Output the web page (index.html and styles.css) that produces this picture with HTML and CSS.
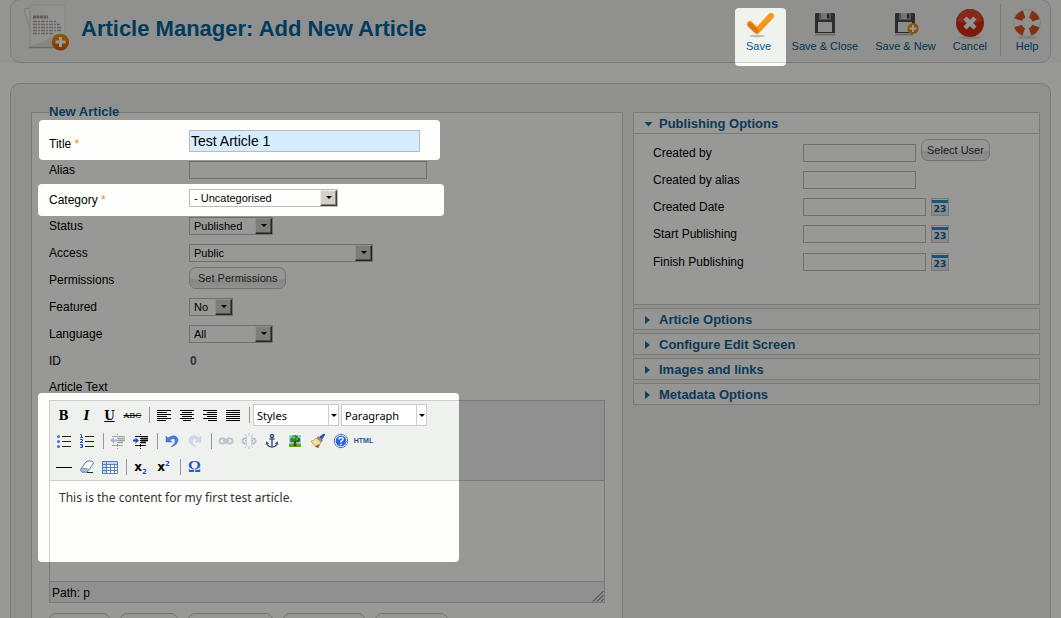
FILE: index.html
```html
<!DOCTYPE html>
<html lang="en">
<head>
<meta charset="utf-8">
<title>Article Manager: Add New Article</title>
<link rel="stylesheet" href="styles.css">
</head>
<body>
<div class="page">
  <div class="topstrip">
    <header class="header">
      <svg class="article-icon" width="48" height="48" viewBox="0 0 48 48" aria-hidden="true">
        <defs>
          <linearGradient id="sheet" x1="0" y1="0" x2="1" y2="1"><stop offset="0" stop-color="#eeefec"/><stop offset="1" stop-color="#fafafa"/></linearGradient>
          <linearGradient id="orange" x1="0" y1="0" x2="0" y2="1"><stop offset="0" stop-color="#f29a00"/><stop offset="1" stop-color="#d65200"/></linearGradient>
        </defs>
        <path d="M1 5l6-1v22z" fill="#f6f6f6" stroke="#d0d0ce"/>
        <path d="M7 1h35v42H7z" fill="url(#sheet)" stroke="#dcdcda"/>
        <path d="M6 43.500h37" stroke="#b0b0ae" stroke-width="1.500"/>
        <path d="M8 41q16-3 24-11h9v12H8z" fill="#dfdfdd"/>
        <path d="M10 13h15" stroke="#a89494" stroke-width="3" stroke-dasharray="3 .5"/>
        <path d="M10 17.500h24M10 20.500h27M10 23.500h28M10 26.500h28M10 29.500h20" stroke="#b0a8a8" stroke-width="1.500" stroke-dasharray="4 1 2 1"/>
        <circle cx="37.500" cy="38" r="8.600" fill="url(#orange)"/>
        <path d="M37.500 33v10M32.500 38h10" stroke="#fff" stroke-width="3"/>
      </svg>
      <h1 class="title">Article Manager: Add New Article</h1>
      <div class="actions">
        <button class="action" type="button">
          <svg width="32" height="32" viewBox="0 0 32 32" aria-hidden="true">
            <ellipse cx="14" cy="28" rx="8" ry="1.200" fill="#b9bbb8"/>
            <g fill="none" stroke-linecap="round" stroke-linejoin="round" stroke-width="6">
              <path d="M7 16l7 7L28 8" stroke="#f7941d"/>
              <path d="M7 17l6 5.500" stroke="#d97b12" stroke-width="5"/>
            </g>
          </svg>Save</button>
        <button class="action" type="button">
          <svg width="32" height="32" viewBox="0 0 32 32" aria-hidden="true">
            <path d="M7 5h18l1 1v19H6V6z" fill="#4b4b50"/>
            <path d="M10 5h12v7H10z" fill="#8b8b8f"/><path d="M12 5h6v6h-6z" fill="#c4c4c6"/><path d="M18 6h2v4h-2z" fill="#3c3c40"/>
            <path d="M9 14h14v10H9z" fill="#e9ecec"/><path d="M6 26.500h20" stroke="#b5b5b5" stroke-width="2"/>
          </svg>Save &amp; Close</button>
        <button class="action" type="button">
          <svg width="32" height="32" viewBox="0 0 32 32" aria-hidden="true">
            <path d="M7 5h18l1 1v19H6V6z" fill="#4b4b50"/>
            <path d="M10 5h12v7H10z" fill="#8b8b8f"/><path d="M12 5h6v6h-6z" fill="#c4c4c6"/><path d="M18 6h2v4h-2z" fill="#3c3c40"/>
            <path d="M9 14h14v10H9z" fill="#e9ecec"/><path d="M6 26.500h18" stroke="#b5b5b5" stroke-width="2"/>
            <circle cx="24" cy="20.500" r="5.600" fill="#e58a10"/><path d="M24 17v7M20.500 20.500h7" stroke="#fff" stroke-width="2"/>
          </svg>Save &amp; New</button>
        <button class="action" type="button">
          <svg width="32" height="32" viewBox="0 0 32 32" aria-hidden="true">
            <ellipse cx="16" cy="29.500" rx="11" ry="1.500" fill="#d2d4d1"/>
            <circle cx="16" cy="15" r="14" fill="#d02c14"/><path d="M4 13a12 12 0 0 1 24 0q-12 5-24 0z" fill="#e0482e"/>
            <path d="M11 10l10 10M21 10L11 20" stroke="#f6f6f6" stroke-width="4.500"/>
          </svg>Cancel</button>
        <span class="divider"></span>
        <button class="action" type="button">
          <svg width="32" height="32" viewBox="0 0 32 32" aria-hidden="true">
            <ellipse cx="16" cy="29.500" rx="10" ry="1.500" fill="#d2d4d1"/>
            <circle cx="16" cy="15" r="9.500" fill="none" stroke="#f1f1f1" stroke-width="8"/>
            <circle cx="16" cy="15" r="9.500" fill="none" stroke="#d8521e" stroke-width="8" stroke-dasharray="8.500 6.420" stroke-dashoffset="-3.200"/>
            <circle cx="16" cy="15" r="13.500" fill="none" stroke="#c9c9c7" stroke-width=".6"/>
          </svg>Help</button>
      </div>
    </header>
  </div>

  <main class="content">
    <fieldset class="form">
      <legend>New Article</legend>
      <div class="row required tall"><label for="title">Title <span class="star">*</span></label><input class="field title-field" id="title" value="Test Article 1"></div>
      <div class="row"><label for="alias">Alias</label><input class="field alias-field" id="alias"></div>
      <div class="row required"><label for="category">Category <span class="star">*</span></label><span class="pick w-category"><select id="category"><option>- Uncategorised</option></select><i class="drop"></i></span></div>
      <div class="row"><label for="status">Status</label><span class="pick w-status"><select id="status"><option>Published</option></select><i class="drop"></i></span></div>
      <div class="row"><label for="access">Access</label><span class="pick w-access"><select id="access"><option>Public</option></select><i class="drop"></i></span></div>
      <div class="row top"><label for="perm">Permissions</label><button class="pill" id="perm" type="button">Set Permissions</button></div>
      <div class="row"><label for="featured">Featured</label><span class="pick w-featured"><select id="featured"><option>No</option></select><i class="drop"></i></span></div>
      <div class="row"><label for="language">Language</label><span class="pick w-status"><select id="language"><option>All</option></select><i class="drop"></i></span></div>
      <div class="row"><span class="label">ID</span><output class="idvalue">0</output></div>
      <div class="row last"><span class="label" id="text-label">Article Text</span></div>

      <div class="editor">
        <div class="tools">
          <div class="toolrow">
            <button class="tool glyph" type="button"><b>B</b></button>
            <button class="tool glyph" type="button"><b><em>I</em></b></button>
            <button class="tool glyph" type="button"><b><u>U</u></b></button>
            <button class="tool glyph small" type="button"><s>ABC</s></button>
            <span class="bar"></span>
            <button class="tool" type="button" aria-label="Align left"><svg width="16" height="16"><path d="M1 3.500h14M1 5.500h10M1 7.500h14M1 9.500h10M1 11.500h14M1 13.500h9" stroke="#000"/></svg></button>
            <button class="tool" type="button" aria-label="Align centre"><svg width="16" height="16"><path d="M1 3.500h14M3 5.500h10M1 7.500h14M3 9.500h10M1 11.500h14M4 13.500h8" stroke="#000"/></svg></button>
            <button class="tool" type="button" aria-label="Align right"><svg width="16" height="16"><path d="M1 3.500h14M5 5.500h10M1 7.500h14M5 9.500h10M1 11.500h14M6 13.500h9" stroke="#000"/></svg></button>
            <button class="tool" type="button" aria-label="Justify"><svg width="16" height="16"><path d="M1 3.500h14M1 5.500h14M1 7.500h14M1 9.500h14M1 11.500h14M1 13.500h14" stroke="#000"/></svg></button>
            <span class="bar"></span>
            <span class="combo"><select aria-label="Styles"><option>Styles</option></select><i class="arrow"></i></span>
            <span class="combo"><select aria-label="Format"><option>Paragraph</option></select><i class="arrow"></i></span>
          </div>
          <div class="toolrow">
            <button class="tool" type="button" aria-label="Bullets"><svg width="16" height="16"><path d="M6 3.500h9M6 8.500h9M6 13.500h9" stroke="#222"/><g fill="#4a72c4"><circle cx="2.500" cy="3.500" r="1.500"/><circle cx="2.500" cy="8.500" r="1.500"/><circle cx="2.500" cy="13.500" r="1.500"/></g></svg></button>
            <button class="tool" type="button" aria-label="Numbers"><svg width="16" height="16"><path d="M6 3.500h9M6 8.500h9M6 13.500h9" stroke="#222"/><path d="M1 1.500h1.500v3M1 4.500h3M1 6.500h2.500v1.500L1 9.500h3M1 11.500h2.500v1.500H2h1.500v1.500H1" fill="none" stroke="#2b55c0"/></svg></button>
            <span class="bar"></span>
            <button class="tool faded" type="button" aria-label="Outdent"><svg width="16" height="16"><path d="M2 3.500h13M2 12.500h11" stroke="#333"/><path d="M8 5.500h7M8 7.500h7M8 9.500h5" stroke="#333" stroke-width="1.500"/><path d="M7.500 1v15" stroke="#333" stroke-dasharray="1 1"/><path d="M0 7.500l4-3v2h3v2H4v2z" fill="#345aa8"/></svg></button>
            <button class="tool" type="button" aria-label="Indent"><svg width="16" height="16"><path d="M2 3.500h13M2 12.500h11" stroke="#000"/><path d="M8 5.500h7M8 7.500h7M8 9.500h5" stroke="#000" stroke-width="1.500"/><path d="M7.500 1v15" stroke="#000" stroke-dasharray="1 1"/><path d="M6 7.500l-3.500-3v2H0v2h2.500v2z" fill="#2148c4"/></svg></button>
            <span class="bar"></span>
            <button class="tool" type="button" aria-label="Undo"><svg width="16" height="16"><path d="M2 3v6h6L6 7q4-3 5 0 1 3-4 7 8-3 7-8Q11 0 4 5z" fill="#4a7cdc" stroke="#3a66c0" stroke-width=".5"/></svg></button>
            <button class="tool faded" type="button" aria-label="Redo"><svg width="16" height="16"><path d="M14 3v6H8l2-2Q6 4 5 7q-1 3 4 7-8-3-7-8Q5 0 12 5z" fill="#9db4d8" stroke="#7a94bd" stroke-width=".5"/></svg></button>
            <span class="bar"></span>
            <button class="tool faded" type="button" aria-label="Link"><svg width="16" height="16"><g fill="none" stroke="#75839b" stroke-width="2"><rect x="1.500" y="5.500" width="6" height="5" rx="2.500"/><rect x="8.500" y="5.500" width="6" height="5" rx="2.500"/><path d="M5 8h6"/></g></svg></button>
            <button class="tool faded" type="button" aria-label="Unlink"><svg width="16" height="16"><g fill="none" stroke="#75839b" stroke-width="2"><path d="M6 10.500H4a2.500 2.500 0 0 1 0-5h2M10 5.500h2a2.500 2.500 0 0 1 0 5h-2"/><path d="M4 8h2M10 8h2"/></g><path d="M8 0v3M4 1l2 3M12 1l-2 3M8 16v-3M4 15l2-3M12 15l-2-3" stroke="#75839b"/></svg></button>
            <button class="tool" type="button" aria-label="Anchor"><svg width="16" height="16"><g fill="none" stroke="#3a5688" stroke-width="1.500"><circle cx="8" cy="3" r="1.500"/><path d="M8 5v9M5.500 6h5M3 10q.5 4 5 4t5-4"/></g><path d="M1.500 11.500l1-3.500L5 11zM11 11l2.500-3 1 3.500z" fill="#3a5688"/></svg></button>
            <button class="tool" type="button" aria-label="Image"><svg width="16" height="16"><path d="M1 1h14v14H1z" fill="#fff"/><path d="M2 2h12v9H2z" fill="#8fc8f4"/><path d="M2 11h12v3H2z" fill="#58a52a"/><path d="M7 7h2l.5 6h-3z" fill="#5e4312"/><circle cx="8" cy="5" r="3" fill="#2d8a1c"/><circle cx="5.300" cy="7" r="2.200" fill="#2d8a1c"/><circle cx="11" cy="7" r="2.200" fill="#1f7014"/><circle cx="7" cy="4.500" r="1.200" fill="#8ccc4c"/><circle cx="10" cy="6" r="1" fill="#6ab83a"/></svg></button>
            <button class="tool" type="button" aria-label="Clean up"><svg width="16" height="16"><path d="M13 1q2-1 2 1l-4 6-3-3z" fill="#304f9c"/><path d="M8 3l5 4-2 3-5-4z" fill="#8e8a8c"/><path d="M6 5l5 4-3 6Q3 13 1 8q3 0 5-3z" fill="#f5dfa0" stroke="#b8954c" stroke-width=".7"/><path d="M5 13l3 2 2-4z" fill="#8c6430"/></svg></button>
            <button class="tool" type="button" aria-label="Help"><svg width="16" height="16"><circle cx="8" cy="8" r="6.700" fill="#fff" stroke="#4272d6"/><circle cx="8" cy="8" r="5.400" fill="#2465dc"/><path d="M6 6.500Q6 4.500 8 4.500t2 1.700Q10 7.500 8 8.200V9.500M8 10.700v1.500" fill="none" stroke="#fff" stroke-width="1.500"/></svg></button>
            <button class="tool html" type="button">HTML</button>
          </div>
          <div class="toolrow">
            <button class="tool" type="button" aria-label="Rule"><svg width="16" height="16"><path d="M0 8.500h16" stroke="#000"/></svg></button>
            <button class="tool" type="button" aria-label="Eraser"><svg width="16" height="16"><path d="M7 3q1-1 2-1h4q2 1 1 3l-5 7q-1 1-2 1H3q-2-1-1-3z" fill="#fff" stroke="#5877a8"/><path d="M2 9.500h6l1.500 2L7.500 13H3q-2-1-1-3.500z" fill="#aebfdc" stroke="#5877a8" stroke-width=".7"/><path d="M8 13.500h6" stroke="#222"/></svg></button>
            <button class="tool" type="button" aria-label="Table"><svg width="16" height="16"><path d="M.5 2.500h15v12H.5z" fill="#fff" stroke="#5a80b6"/><path d="M1 3h14v2H1zM1 5h3v9H1z" fill="#c3d6f0"/><path d="M1 5.500h14M1 8.500h14M1 11.500h14M4.500 3v11M8.500 5v9M12.500 5v9" stroke="#5a80b6"/></svg></button>
            <span class="bar"></span>
            <button class="tool script" type="button"><span>x<sub>2</sub></span></button>
            <button class="tool script" type="button"><span>x<sup>2</sup></span></button>
            <span class="bar"></span>
            <button class="tool omega" type="button">Ω</button>
          </div>
        </div>
        <div class="text" contenteditable="true" role="textbox" aria-labelledby="text-label">This is the content for my first test article.</div>
        <div class="path"><span>Path: p</span><svg width="12" height="12" aria-hidden="true"><path d="M1 11.500L11.500 1M5 11.500L11.500 5M9 11.500L11.500 9" stroke="#555"/></svg></div>
      </div>
      <div class="extras">
        <button class="pill x1" type="button" aria-label="Article"></button>
        <button class="pill x2" type="button" aria-label="Image"></button>
        <button class="pill x3" type="button" aria-label="Page break"></button>
        <button class="pill x4" type="button" aria-label="Read more"></button>
        <button class="pill x5" type="button" aria-label="Toggle"></button>
      </div>
    </fieldset>

    <aside class="side">
      <section class="panel">
        <h3><button class="head open" type="button"><i class="tri down"></i>Publishing Options</button></h3>
        <div class="body">
          <div class="orow"><label for="by">Created by</label><input class="field short" id="by"><button class="pill select-user" type="button">Select User</button></div>
          <div class="orow"><label for="byalias">Created by alias</label><input class="field short" id="byalias"></div>
          <div class="orow"><label for="date">Created Date</label><input class="field long" id="date"><button class="cal" type="button"><span>23</span></button></div>
          <div class="orow date"><label for="start">Start Publishing</label><input class="field long" id="start"><button class="cal" type="button"><span>23</span></button></div>
          <div class="orow date"><label for="finish">Finish Publishing</label><input class="field long" id="finish"><button class="cal" type="button"><span>23</span></button></div>
        </div>
      </section>
      <section class="panel"><h3><button class="head" type="button"><i class="tri"></i>Article Options</button></h3></section>
      <section class="panel"><h3><button class="head" type="button"><i class="tri"></i>Configure Edit Screen</button></h3></section>
      <section class="panel"><h3><button class="head" type="button"><i class="tri"></i>Images and links</button></h3></section>
      <section class="panel"><h3><button class="head" type="button"><i class="tri"></i>Metadata Options</button></h3></section>
    </aside>
  </main>

  <!-- Dimming layer with a clear window over each step of the tour -->
  <svg class="dim" aria-hidden="true">
    <mask id="windows">
      <rect width="100%" height="100%" fill="#fff"/>
      <svg x="100%" overflow="visible"><rect x="-326" y="8" width="51" height="58" rx="4"/></svg>
      <rect x="39" y="120" width="401" height="40" rx="4"/>
      <rect x="38" y="184" width="406" height="32" rx="4"/>
      <rect x="38" y="393" width="421" height="169" rx="4"/>
    </mask>
    <rect width="100%" height="100%" fill="#000" fill-opacity=".4" mask="url(#windows)"/>
  </svg>
</div>
</body>
</html>
```
FILE: styles.css
```css
* { box-sizing: border-box; }
body {
  margin: 0;
  background: #fefffc;
  color: #000;
  font: 12px/14px "Liberation Sans", Arial, sans-serif;
}
button, input, select { font: inherit; color: inherit; margin: 0; }
button { cursor: pointer; }
h1, h3 { margin: 0; }

.page { position: relative; height: 100vh; overflow: hidden; }
.dim { position: absolute; inset: 0; width: 100%; height: 100%; pointer-events: none; }

/* Header */
.topstrip { background: #f7f9f5; padding: 0 10px; }
.header {
  display: flex;
  align-items: center;
  height: 64px;
  margin-top: -1px;
  padding: 0 7px 0 12px;
  background: #f0f2ee;
  border: 1px solid #ccc;
  border-radius: 10px;
}
.title { margin-left: 10px; padding-bottom: 4px; color: #00639b; font-size: 22px; line-height: 26px; }
.article-icon { margin-bottom: 6px; }
.actions { display: flex; align-items: flex-start; align-self: flex-start; gap: 17px; margin-left: auto; padding-top: 4px; }
.action {
  display: flex;
  flex-direction: column;
  align-items: center;
  min-width: 32px;
  padding: 4px 0 0;
  border: 0;
  background: none;
  color: #025a8d;
  font-size: 11px;
  line-height: 13px;
  white-space: nowrap;
}
.divider { width: 1px; height: 52px; margin: 0 -7px 0 -4px; background: #ccc; }

/* Content */
.content {
  display: grid;
  grid-template-columns: 592fr 407fr;
  gap: 10px;
  align-items: start;
  margin: 20px 10px 0;
  padding: 20px 10px 20px 20px;
  background: #f0f2ee;
  border: 1px solid #ccc;
  border-radius: 10px;
}
.form {
  min-width: 0;
  margin: 0;
  padding: 5px 17px 20px;
  background: #fefffc;
  border: 1px solid #ccc;
}
.form legend { padding: 0; color: #146295; font-size: 13px; line-height: 16px; font-weight: bold; }

.row { display: flex; align-items: center; height: 27px; }
.row label, .row .label { width: 140px; }
.row.required { height: 29px; }
.row.required label { padding-top: 4px; }
.row.tall { height: 31px; }
.row.tall label { padding-top: 6px; }
.row.top { align-items: flex-start; padding-top: 1px; }
.row.top label { padding-top: 6px; }
.row.last { height: 26px; align-items: flex-start; padding-top: 6px; }
.star { color: #f08a24; }
.idvalue { padding-left: 1px; color: #555; font-weight: bold; }

.field { height: 18px; padding: 0 2px; border: 1px solid #b9bbb8; background: none; }
.title-field { width: 231px; height: 22px; padding: 0 1px; background: #d6ecff; font-size: 14px; }
.alias-field { width: 238px; }

.pick { display: grid; grid-template-columns: 1fr 17px; height: 18px; border: 1px solid #b9bbb8; }
.pick select, .combo select {
  grid-area: 1 / 1 / 2 / 3;
  appearance: none;
  width: 100%;
  padding: 0 4px;
  border: 0;
  background: none;
  font-size: 11px;
  line-height: 14px;
}
.drop {
  grid-area: 1 / 2;
  display: grid;
  place-items: center;
  pointer-events: none;
  background: #d4d0c8;
  border: 1px solid;
  border-color: #eee #404040 #404040 #eee;
  box-shadow: inset -1px -1px #808080;
}
.drop::after, .arrow::after {
  content: "";
  border: solid transparent;
  border-width: 3px 3px 0;
  border-top-color: #000;
}
.w-category { width: 149px; }
.w-status { width: 84px; }
.w-access { width: 184px; }
.w-featured { width: 44px; }

.pill {
  height: 22px;
  padding: 0 8px;
  border: 1px solid #c0c2bf;
  border-radius: 7px;
  background: linear-gradient(#fafbf9 0 50%, #e0e2df 60%, #f0f1ef);
  color: #333;
  font-size: 11px;
  white-space: nowrap;
}

/* Editor */
.editor { border: 1px solid #ccc; }
.tools { padding: 1px 2px 0; height: 80px; background: #eff1ef; border-bottom: 1px solid #ccc; }
.toolrow { display: flex; align-items: center; height: 26px; }
.tool {
  display: grid;
  place-items: center;
  flex: none;
  width: 23px;
  height: 22px;
  padding: 0;
  border: 0;
  background: none;
}
.faded { opacity: .4; }
.glyph { padding-top: 2px; font: 12px/16px "DejaVu Serif", serif; }
.glyph.small { font-size: 8px; }
.html { color: #2c50a0; font-size: 7px; font-weight: bold; }
.script { font: bold 12px/14px "DejaVu Sans", sans-serif; }
.script sub, .script sup { color: #2b55c0; font-size: 7px; line-height: 0; }
.omega { color: #2b5cc4; font: bold 16px/18px "Liberation Serif", serif; }
.bar { flex: none; width: 1px; height: 16px; margin: 0 2px 0 5px; background: #9a96a0; }
.combo {
  display: grid;
  grid-template-columns: 1fr 10px;
  width: 86px;
  height: 22px;
  margin: 0 1px;
  border: 1px solid #ccc;
  background: #fff;
}
.combo select { padding: 1px 3px 0; font-family: "Noto Sans", sans-serif; }
.combo + .combo { margin-left: 1px; }
.arrow { grid-area: 1 / 2; display: grid; place-items: center; border-left: 1px solid #ccc; pointer-events: none; }
.text { height: 100px; padding: 9px; color: #333; font: 12px/15px "Noto Sans", sans-serif; }
.path {
  display: flex;
  justify-content: space-between;
  align-items: center;
  height: 21px;
  padding: 1px 0 0 2px;
  background: #eff1ef;
  border-top: 1px solid #ccc;
}
.path svg { align-self: flex-end; }
.extras { display: flex; gap: 10px; padding-top: 10px; }
.x1 { width: 61px; }
.x2 { width: 58px; }
.x3 { width: 85px; }
.x4 { width: 82px; }
.x5 { width: 73px; }

/* Option panels */
.side { display: grid; gap: 3px; padding-top: 8px; }
.panel { border: 1px solid #ccc; background: #fefffc; }
.head {
  display: flex;
  align-items: center;
  width: 100%;
  height: 20px;
  padding: 2px 10px 0;
  border: 0;
  background: #f8faf6;
  color: #146295;
  font-size: 13px;
  font-weight: bold;
}
.head.open { height: 21px; border-bottom: 1px solid #ccc; background: #fefffc; }
.tri { width: 5px; height: 8px; margin: 0 9px 0 1px; background: #1f7094; clip-path: polygon(0 0, 100% 50%, 0 100%); }
.tri.down { width: 9px; height: 5px; margin: 0 6px 0 0; clip-path: polygon(0 0, 100% 0, 50% 100%); }
.body { padding: 5px 19px 28px; }
.orow { display: flex; align-items: center; gap: 5px; height: 27px; }
.orow.date { height: 28px; }
.orow label { width: 145px; }
.short { width: 113px; }
.long { width: 123px; }
.select-user { align-self: flex-start; padding: 0 5px; }
.cal {
  display: grid;
  align-items: end;
  justify-items: center;
  width: 18px;
  height: 18px;
  padding: 0;
  border: 1px solid #c6c8c5;
  background: linear-gradient(#fff 0 1px, #2d8ec0 1px 4px, #f1f3f1 4px, #dfe3e4);
  color: #0d5f90;
  font: bold 9px/11px "DejaVu Sans", sans-serif;
}
```
